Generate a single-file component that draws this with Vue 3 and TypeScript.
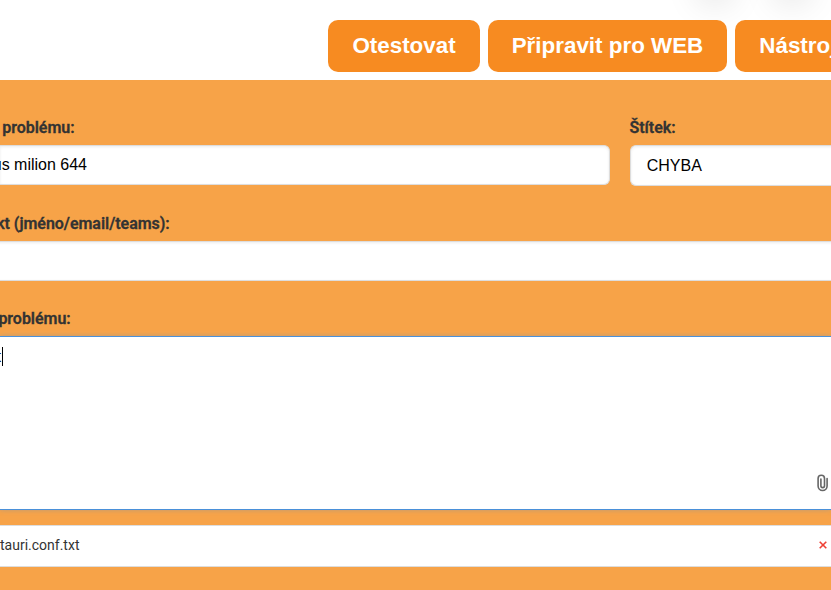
<script setup lang="ts">
import { ref } from 'vue'

const actions: string[] = ['Otestovat', 'Připravit pro WEB', 'Nástroje']
const title = ref('virus milion 644')
const tag = ref('CHYBA')
const description = ref('test')
const attachment = ref('tauri.conf.txt')
</script>

<template>
  <main class="page">
    <header class="toolbar">
      <i class="shade first"></i>
      <i class="shade second"></i>
      <button v-for="action in actions" :key="action" class="action">{{ action }}</button>
    </header>
    <section class="form">
      <div class="row">
        <div class="field name-field">
          <div class="label clip name-label"><span>Název problému:</span></div>
          <div class="control name-control"><div class="clip name-value"><span>{{ title }}</span></div></div>
        </div>
        <div class="field tag-field">
          <div class="label tag-label">Štítek:</div>
          <div class="control tag-control">{{ tag }}</div>
        </div>
      </div>
      <div class="field contact">
        <div class="label clip contact-label"><span>Kontakt (jméno/email/teams):</span></div>
        <div class="control wide"></div>
      </div>
      <div class="field description">
        <div class="label clip description-label"><span>Popis problému:</span></div>
        <div class="editor">
          <div class="line"><div class="clip typed"><span>{{ description }}</span></div><i class="caret"></i></div>
          <svg class="clip-icon" width="12" height="18" viewBox="0 0 12 18" fill="none" stroke="#666" stroke-width="1.6" stroke-linecap="round">
            <path d="M11.1 4.6v7.4a4.5 4.5 0 0 1-9 0V4.4a3.2 3.2 0 0 1 6.4 0v7.4a1.8 1.8 0 0 1-3.6 0V5" />
          </svg>
        </div>
      </div>
      <div class="attachment">
        <span>{{ attachment }}</span>
        <svg class="remove" width="8" height="8" viewBox="0 0 8 8" fill="none" stroke="#ee4035" stroke-width="1.6">
          <path d="M.7.7l6.6 6.6M7.3.7L.7 7.3" />
        </svg>
      </div>
    </section>
  </main>
</template>

<style>
body { overflow: hidden; }
</style>

<style scoped>
* { box-sizing: border-box; }
.page {
  width: 831px;
  height: 590px;
  overflow: hidden;
  background: #fff;
  font-family: Roboto, sans-serif;
}
.toolbar {
  position: relative;
  display: flex;
  gap: 8px;
  height: 80px;
  padding: 20px 0 0 328.4px;
  overflow: hidden;
}
.action {
  position: relative;
  flex: none;
  height: 52px;
  padding: 0 24px;
  border: 0;
  border-radius: 10px;
  background: #f78b21;
  color: #fff;
  font: bold 22.4px "Liberation Sans", Arial, sans-serif;
  white-space: nowrap;
}
.shade {
  position: absolute;
  top: -40px;
  width: 36px;
  height: 36px;
  border-radius: 50%;
  box-shadow: 0 8px 34px rgba(0, 0, 0, .13);
}
.first { left: 697px; }
.second { left: 774px; }
.form {
  height: 510px;
  padding-top: 38px;
  background: #f7a348;
}
.row { display: flex; gap: 20px; }
.name-field { width: 610px; }
.tag-field { width: 201px; }
.label {
  height: 20px;
  margin-bottom: 7px;
  color: #333;
  font-size: 16px;
  font-weight: 600;
  line-height: 20px;
  letter-spacing: -.03px;
  -webkit-text-stroke: .3px #333;
  white-space: nowrap;
}
.clip {
  display: flex;
  justify-content: flex-end;
  overflow: hidden;
}
.name-label { width: 74.5px; }
.tag-label { margin-left: -.5px; }
.contact-label { width: 169.7px; }
.description-label { width: 70.7px; }
.control {
  height: 40px;
  border: 1px solid #ddd;
  background: #fff;
  box-shadow: inset 0 1px 3px rgba(0, 0, 0, .08);
  color: #000;
  font: 16px/38px "Liberation Sans", Arial, sans-serif;
  white-space: nowrap;
}
.name-control { border-left: 0; border-radius: 0 6px 6px 0; }
.name-value { width: 87px; }
.tag-control {
  height: 41px;
  padding-left: 15.7px;
  margin-right: -5px;
  border-right: 0;
  border-radius: 6px 0 0 6px;
  line-height: 39px;
}
.contact { margin-top: 28px; }
.wide { margin: 0 -5px; border-width: 1px 0; }
.description { margin-top: 28px; }
.editor {
  display: flex;
  flex-direction: column;
  justify-content: space-between;
  height: 174px;
  padding: 10px 3px 17px 0;
  border: solid #4a90d9;
  border-width: 1px 0;
  background: #fff;
  box-shadow: 0 0 5px rgba(74, 144, 217, .35);
}
.line {
  display: flex;
  height: 20px;
  font: 16px/20px "Liberation Sans", Arial, sans-serif;
}
.typed { width: 2px; padding-right: 1px; }
.caret { width: 1px; height: 19px; background: #000; }
.clip-icon { align-self: flex-end; }
.attachment {
  display: flex;
  align-items: center;
  justify-content: space-between;
  height: 42px;
  margin-top: 15px;
  padding: 0 4px 2px 0;
  border: solid #ddd;
  border-width: 1px 0;
  background: #fff;
  color: #333;
  font-size: 14px;
}
</style>
